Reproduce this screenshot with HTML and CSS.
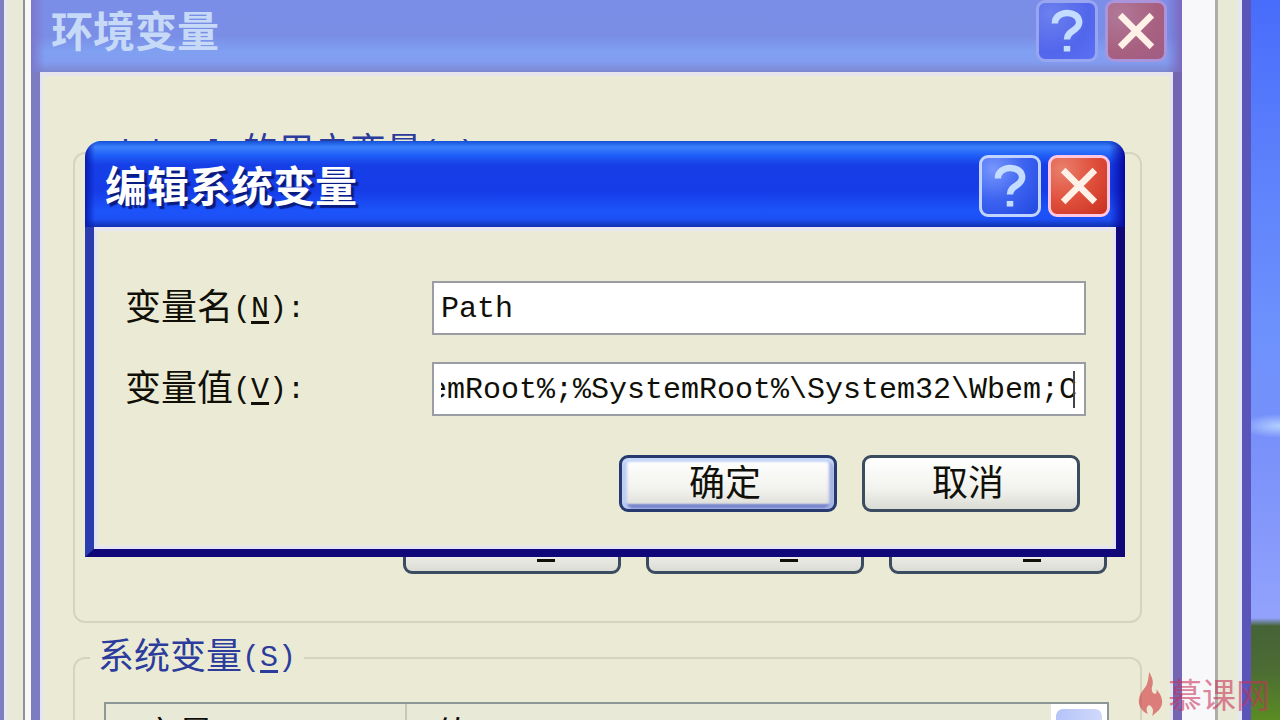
FILE: index.html
```html
<!DOCTYPE html>
<html lang="zh-CN">
<head>
<meta charset="utf-8">
<title>编辑系统变量</title>
<link rel="stylesheet" href="styles.css">
</head>
<body>
<main class="desktop">
  <div class="window-properties"><div class="properties-page"></div></div>

  <section class="window window-env">
    <header class="titlebar">
      <h2 class="title">环境变量</h2>
      <button class="caption-button help" type="button" aria-label="帮助"><svg class="caption-icon" viewBox="0 0 60 60"><path d="M17 22C17 7 43 7 43 21C43 30 30 29 30 39"/><path d="M30 46V52"/></svg></button>
      <button class="caption-button close" type="button" aria-label="关闭"><svg class="caption-icon" viewBox="0 0 60 60"><path d="M13 13L47 47M47 13L13 47"/></svg></button>
    </header>
    <div class="env-body">
      <fieldset class="group">
        <legend><span class="latin">Michael </span>的用户变量<span class="latin">(<u>U</u>)</span></legend>
        <div class="list list-user"></div>
        <div class="actions">
          <button class="button" type="button">新建<span class="latin">(<u>N</u>)</span></button>
          <button class="button" type="button">编辑<span class="latin">(<u>E</u>)</span></button>
          <button class="button" type="button">删除<span class="latin">(<u>D</u>)</span></button>
        </div>
      </fieldset>
      <fieldset class="group">
        <legend>系统变量<span class="latin">(<u>S</u>)</span></legend>
        <div class="list list-system">
          <table class="columns">
            <thead><tr><th class="name-column">变量</th><th>值</th></tr></thead>
          </table>
          <button class="scroll-up" type="button" aria-label="向上滚动"></button>
        </div>
      </fieldset>
    </div>
  </section>

  <section class="window window-edit">
    <header class="titlebar">
      <h1 class="title">编辑系统变量</h1>
      <button class="caption-button help" type="button" aria-label="帮助"><svg class="caption-icon" viewBox="0 0 60 60"><path d="M17 22C17 7 43 7 43 21C43 30 30 29 30 39"/><path d="M30 46V52"/></svg></button>
      <button class="caption-button close" type="button" aria-label="关闭"><svg class="caption-icon" viewBox="0 0 60 60"><path d="M13 13L47 47M47 13L13 47"/></svg></button>
    </header>
    <form class="edit-form">
      <div class="fields">
        <label for="name">变量名<span class="latin">(<u>N</u>):</span></label>
        <div class="field"><input id="name" class="text-box" type="text" value="Path"></div>
        <label for="value">变量值<span class="latin">(<u>V</u>):</span></label>
        <div class="field"><input id="value" class="text-box scrolled" type="text" value="emRoot%;%SystemRoot%\System32\Wbem;C"><span class="text-cursor"></span></div>
      </div>
      <div class="actions">
        <button class="button default" type="button">确定</button>
        <button class="button" type="button">取消</button>
      </div>
    </form>
  </section>

  <div class="watermark">
    <svg class="flame" viewBox="0 0 25 44"><path d="M11 0C14 5 16 9 14 15C13 19 15 22 17 22C19 21 19 19 18 17C23 22 26 29 23 35C21 39 17 41 14 44C16 38 15 35 11 33C8 35 8 38 10 42C3 39 0 33 1 27C2 20 7 17 9 12C10 8 11 4 11 0Z"/></svg>
    <span>慕课网</span>
  </div>
</main>
</body>
</html>
```
FILE: styles.css
```css
* { box-sizing: border-box; }

body {
  margin: 0;
  font: 36px/40px "Noto Sans CJK SC", sans-serif;
  color: #101008;
}

.desktop {
  position: relative;
  height: 100vh;
  overflow: hidden;
  background:
    radial-gradient(ellipse 40px 12px at right 0 top 426px, #b4d0ff, transparent),
    linear-gradient(#486cfb 0, #5c80fb 160px, #6e92fc 340px, #7890fa 440px, #92a2fc 618px, #456336 626px, #4c6c34 670px, #5a8c22 720px);
}

.latin {
  font-family: "Liberation Mono", "Noto Sans CJK SC", monospace;
  font-size: 30px;
  line-height: 30px;
  vertical-align: 3px;
}

u {
  text-decoration-thickness: 3px;
  text-underline-offset: 4px;
}

button, input {
  margin: 0;
  padding: 0;
  font: inherit;
  color: inherit;
}

/* Windows */

.window-properties {
  position: absolute;
  top: -20px;
  bottom: -20px;
  left: -5px;
  right: 29px;
  padding: 0 24px 0 19px;
  border: 9px solid #7c7ec0;
  border-right-color: #5a55b8;
  background: #e9e9d8;
  box-shadow: inset 3px 0 #e8e8f0, inset -4px 0 #e4e8f4;
}

.properties-page {
  height: 100%;
  border-left: 2px solid #8f9294;
  border-right: 3px solid #aeaea6;
  background: #f8f8fa;
}

.window {
  position: absolute;
  display: flex;
  flex-direction: column;
}

.window-env {
  top: -14px;
  left: 31px;
  right: 98px;
}

.window-edit {
  top: 141px;
  left: 85px;
  right: 155px;
}

.titlebar {
  display: flex;
  align-items: center;
  gap: 7px;
  height: 86px;
  padding: 4px 15px 0 20px;
  border-radius: 16px 16px 0 0;
}

.window-edit .titlebar {
  background: linear-gradient(90deg, #0a1cb0 0, transparent 10px calc(100% - 16px), #0808a0 100%),
    linear-gradient(#1450d8 0, #3c80fc 6px, #2060f8 14px, #163ee6 24px, #163ce8 50px, #1c54fa 70px, #1c50f4 78px, #1030b0 86px);
}

.window-env .titlebar {
  background: linear-gradient(90deg, #7c78cc 0, transparent 14px calc(100% - 16px), #7a68c0 100%),
    linear-gradient(#7c8ee8 0, #7a8ee6 50px, #80a0f2 66px, #829cf0 76px, #7c88d0 86px);
}

.title {
  flex: 1;
  margin: 0;
  padding-bottom: 4px;
  font-size: 42px;
  line-height: 50px;
  font-weight: 700;
  color: #fff;
  text-shadow: 3px 3px 1px #0a1c80;
}

.window-env .title {
  color: #c6daf8;
  text-shadow: none;
}

.caption-button {
  width: 62px;
  height: 62px;
  border: 3px solid #c0d4ff;
  border-radius: 9px;
  background: radial-gradient(circle at 20% 20%, #7896fc, #3c62f0 50%, #2048e0);
}

.caption-button.close {
  border-color: #ffc8e0;
  background: radial-gradient(circle at 20% 20%, #e8806c, #e0503c 50%, #c83020);
}

.window-env .caption-button {
  border-color: #98a6f2;
  background: radial-gradient(circle at 20% 20%, #6c80ee, #5266ec 60%, #5c70f4);
}

.window-env .caption-button.close {
  border-color: #aa94dc;
  background: radial-gradient(circle at 20% 20%, #b07898, #a86080 60%, #a05c84);
}

.caption-icon {
  display: block;
  width: 100%;
  fill: none;
  stroke-width: 7;
}

.help .caption-icon { stroke: #c4dcff; }
.close .caption-icon { stroke: #fff0e8; }

.env-body {
  height: 680px;
  padding: 60px 31px 0 33px;
  border: solid #7c7cc0;
  border-width: 0 9px;
  border-right-color: #7566b4;
  background: #ebebd5;
  box-shadow: inset 0 4px 2px #e6e4ee, inset 3px 0 2px #e4e4f4, inset -3px 0 2px #e4e4f0;
}

.edit-form {
  padding: 54px 30px 37px 31px;
  border: solid #100878;
  border-width: 0 9px 8px;
  border-left-color: #2a3cae;
  background: #ebebd5;
  box-shadow: inset 0 4px 2px #e8e6f2, inset 3px 0 2px #dce4f8, inset -3px -3px 2px #e6e2f8;
}

/* Groups and lists */

.group {
  margin: 0 0 14px;
  padding: 10px 31px 47px 29px;
  border: 2px solid #d5d5bf;
  border-radius: 12px;
}

.group legend {
  margin-left: -14px;
  padding: 0 8px 5px;
  line-height: 32px;
  color: #2c3c9c;
}

.list {
  border: 2px solid #8c9898;
  background: #fff;
}

.list-user {
  height: 314px;
  margin-bottom: 20px;
}

.list-system {
  display: flex;
  justify-content: space-between;
  height: 200px;
  margin-top: 14px;
}

.columns {
  flex: 1;
  height: 60px;
  border-collapse: collapse;
  background: #e9e9d8;
}

.columns th {
  padding: 8px 0 0 28px;
  font-weight: 400;
  text-align: left;
  vertical-align: top;
}

.columns .name-column {
  width: 300px;
  padding-left: 36px;
  border-right: 2px solid #c8c8b8;
}

.scroll-up {
  width: 56px;
  height: 56px;
  border: 5px solid #fff;
  border-radius: 12px;
  background: linear-gradient(90deg, #b4c4f8, #d0d8fc);
}

/* Form */

.fields {
  display: grid;
  grid-template-columns: 307px 1fr;
  row-gap: 27px;
  align-items: center;
}

.fields label { padding-bottom: 8px; }

.field { position: relative; }

.text-box {
  display: block;
  width: 100%;
  height: 54px;
  padding: 2px 7px 0;
  border: 2px solid #9a9ea4;
  border-radius: 0;
  outline: 0;
  background: #fff;
  font-family: "Liberation Mono", monospace;
  font-size: 30px;
}

.text-box.scrolled { text-indent: -12px; }

.text-cursor {
  position: absolute;
  top: 9px;
  right: 11px;
  width: 2px;
  height: 37px;
  background: #444;
}

.actions {
  display: flex;
  justify-content: flex-end;
  gap: 25px;
}

.group .actions { margin-right: 2px; }

.edit-form .actions { margin: 39px 6px 0 0; }

.button {
  width: 218px;
  height: 57px;
  padding: 0 6px 8px 0;
  border: 3px solid #3c4c60;
  border-radius: 9px;
  background: linear-gradient(#fff, #f2f2ee 60%, #dcdcd6);
  line-height: 36px;
  white-space: nowrap;
}

.group .button {
  padding: 0 4px 20px 0;
}

.group .button u { text-underline-offset: 8px; }

.button.default {
  border-color: #263a70;
  box-shadow: inset 0 4px 2px #c8d8f8, inset 5px 0 3px #bccef4, inset -5px 0 3px #a4b4e4, inset 0 -5px 2px #7684cc;
}

.watermark {
  position: absolute;
  right: 10px;
  bottom: 4px;
  display: flex;
  align-items: center;
  gap: 5px;
  font-size: 34px;
  color: #c8325a;
  opacity: 0.58;
}

.flame {
  width: 25px;
  height: 44px;
  fill: #d03038;
}
```
